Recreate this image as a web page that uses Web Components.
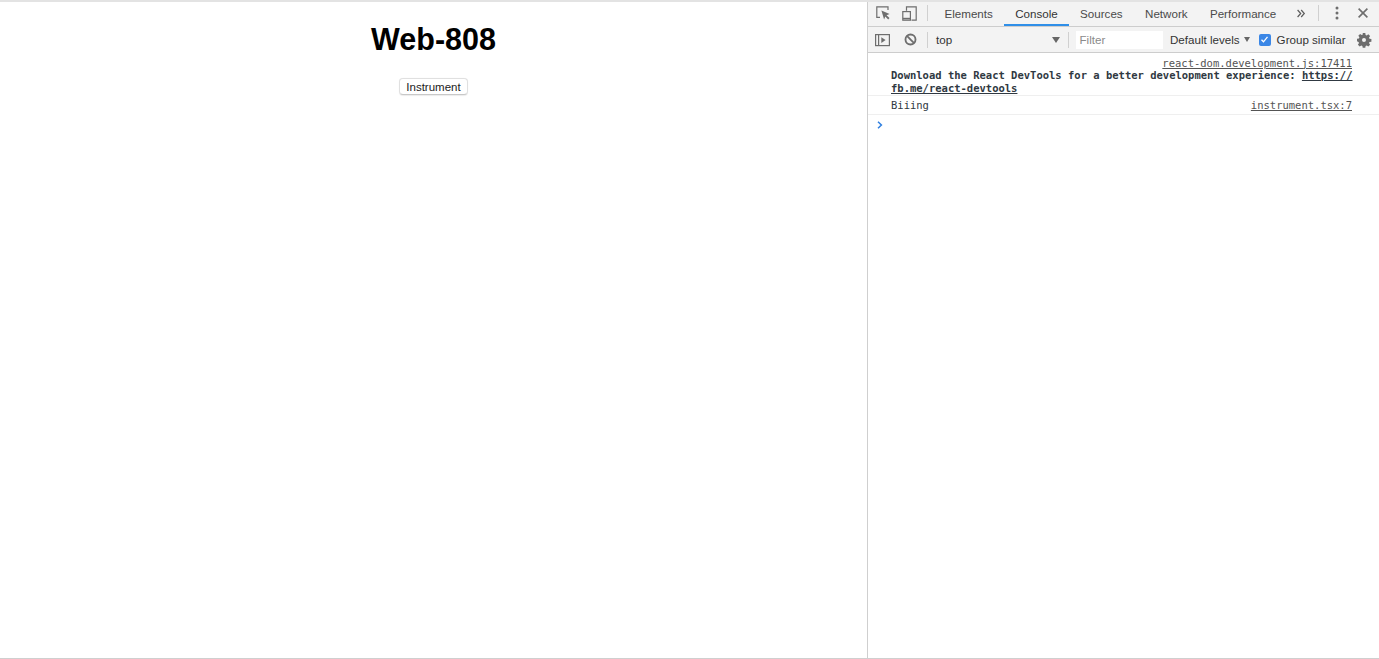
<!DOCTYPE html>
<html>
<head>
<meta charset="utf-8">
<title>Web-808</title>
<style>
  html, body { margin: 0; height: 100%; overflow: hidden; background: #fff; }
  body { font-family: "Liberation Sans", Arial, sans-serif; }
</style>
</head>
<body>
<browser-frame>
  <app-page slot="page" heading="Web-808">
    <app-button>Instrument</app-button>
  </app-page>
  <dev-tools slot="tools"></dev-tools>
</browser-frame>

<script>
// outer frame: page on the left, devtools on the right
class BrowserFrame extends HTMLElement {
  constructor() {
    super();
    this.attachShadow({ mode: 'open' });
    this.shadowRoot.innerHTML = `
      <style>
        :host {
          display: grid;
          grid-template-columns: 867px 1fr;
          height: 659px;
          box-sizing: border-box;
          border-top: 2px solid #e3e3e3;
          border-bottom: 1px solid #cfcfcf;
        }
      </style>
      <slot name="page"></slot>
      <slot name="tools"></slot>
    `;
  }
}

class AppPage extends HTMLElement {
  constructor() {
    super();
    this.attachShadow({ mode: 'open' });
    this.shadowRoot.innerHTML = `
      <style>
        :host {
          display: flex;
          flex-direction: column;
          align-items: center;
          padding-top: 19px;
          color: #000;
          font-family: "Liberation Sans", Arial, sans-serif;
        }
        h1 {
          margin: 0 0 20px;
          font-size: 30.5px;
          line-height: 37px;
          font-weight: 700;
        }
      </style>
      <h1></h1>
      <slot></slot>
    `;
  }
  connectedCallback() {
    this.shadowRoot.querySelector('h1').textContent = this.getAttribute('heading');
  }
}

class AppButton extends HTMLElement {
  constructor() {
    super();
    this.attachShadow({ mode: 'open' });
    this.shadowRoot.innerHTML = `
      <style>
        :host { display: inline-block; }
        button {
          display: block;
          box-sizing: border-box;
          height: 17px;
          width: 69px;
          padding: 0;
          background: #fff;
          border: 1px solid #e0e0e0;
          border-bottom-color: #c8c8c8;
          border-radius: 4px;
          box-shadow: 0 .5px 1px rgba(0, 0, 0, .08);
          font: 11.5px "Liberation Sans", Arial, sans-serif;
          color: #1c1c1c;
        }
      </style>
      <button><slot></slot></button>
    `;
  }
}

const ICONS = {
  inspect: `<svg width="14" height="14" viewBox="0 0 14 14" fill="none" stroke="#6e6e6e" stroke-width="1.2">
      <path d="M4 11.400H.8V.8H12V4"/><path d="M5.400 4.600 13.600 8l-3.100 1.200 3 2.900-1.300 1.300-2.900-3-1.200 3.100z" fill="#6e6e6e" stroke="none"/></svg>`,
  device: `<svg width="15" height="15" viewBox="0 0 15 15" fill="none" stroke="#6e6e6e" stroke-width="1.2">
      <path d="M4.500 4.800V.8h9.700v13.400H9.500"/><rect x=".8" y="5.600" width="7.600" height="8.600"/><path d="M.8 12.600h7.600" stroke-width="1.600"/></svg>`,
  drawer: `<svg width="15" height="14" viewBox="0 0 15 14" fill="none" stroke="#6e6e6e" stroke-width="1.2">
      <rect x=".6" y="1.600" width="13.800" height="11"/><path d="M3.600 1.600v11"/><path d="M6.300 4.200 10.600 7.100 6.300 10z" fill="#6e6e6e" stroke="none"/></svg>`,
  clear: `<svg width="13" height="13" viewBox="0 0 14 14" fill="none" stroke="#6e6e6e" stroke-width="2">
      <circle cx="7" cy="7" r="5.400"/><path d="M3.400 3.400 10.600 10.600"/></svg>`,
  more: `<svg width="8" height="9" viewBox="0 0 8 9" fill="none" stroke="#5c5c5c" stroke-width="1.200">
      <path d="M.6 1 3.700 4.500.6 8M4.200 1 7.300 4.500 4.200 8"/></svg>`,
  dots: `<svg width="4" height="14" viewBox="0 0 4 14" fill="#6e6e6e">
      <circle cx="2" cy="2" r="1.500"/><circle cx="2" cy="7" r="1.500"/><circle cx="2" cy="12" r="1.500"/></svg>`,
  close: `<svg width="10" height="10" viewBox="0 0 10 10" fill="none" stroke="#6e6e6e" stroke-width="1.600">
      <path d="M.6.600 9.400 9.400M9.400.600.600 9.400"/></svg>`,
  gear: `<svg width="14" height="14" viewBox="0 0 14 14">
      <path fill="#6e6e6e" fill-rule="evenodd" d="M5.700 0h2.600l.3 1.900 1.100.5 1.600-1.100 1.800 1.800-1.100 1.600.5 1.100 1.900.3v2.600l-1.900.3-.5 1.100 1.100 1.600-1.800 1.800-1.600-1.100-1.100.5-.3 1.900H5.700l-.3-1.900-1.100-.5-1.600 1.100-1.800-1.800 1.100-1.600-.5-1.100L0 8.300V5.700l1.900-.3.500-1.100-1.100-1.600 1.800-1.800 1.600 1.100 1.100-.5zM7 5a2 2 0 1 0 0 4 2 2 0 0 0 0-4z"/></svg>`
};

class DevIcon extends HTMLElement {
  constructor() {
    super();
    this.attachShadow({ mode: 'open' });
  }
  connectedCallback() {
    this.shadowRoot.innerHTML = `
      <style>:host { display: inline-flex; align-items: center; justify-content: center; flex: none; } svg { display: block; overflow: visible; }</style>
      ${ICONS[this.getAttribute('name')]}
    `;
  }
}

class DevTools extends HTMLElement {
  constructor() {
    super();
    this.attachShadow({ mode: 'open' });
    this.shadowRoot.innerHTML = `
      <style>
        :host {
          display: flex;
          flex-direction: column;
          border-left: 1px solid #cfcfcf;
          font-family: "Liberation Sans", Arial, sans-serif;
          font-size: 11.6px;
          color: #333;
          min-width: 0;
        }
        .bar {
          display: flex;
          align-items: center;
          background: #f3f3f3;
          border-bottom: 1px solid #cdcdcd;
          box-sizing: border-box;
          flex: none;
          white-space: nowrap;
        }
        .tabs { height: 25px; }
        .tabs dev-icon, .tabs .sep { margin-bottom: 2px; }
        .filters { height: 26px; }
        .sep { width: 1px; height: 16px; background: #d0d0d0; flex: none; }
        .tab { padding: 0 11.2px 2px; height: 100%; display: flex; align-items: center; color: #4a4a4a; box-sizing: border-box; flex: none; }
        .tab.on { color: #333; border-bottom: 2px solid #2f8fe8; padding-bottom: 0; }
        .filter {
          width: 87px; height: 18px; background: #fff; display: flex; align-items: center;
          padding-left: 3.5px; box-sizing: border-box; color: #8a8a8a; flex: none;
        }
        .check {
          width: 12px; height: 12px; border-radius: 2px; background: #3b87e6; display: flex;
          align-items: center; justify-content: center; flex: none;
        }
        .prompt { padding: 6px 0 0 9px; line-height: 0; }
      </style>
      <div class="bar tabs">
        <dev-icon name="inspect" style="margin-left:8px"></dev-icon>
        <dev-icon name="device" style="margin-left:12px"></dev-icon>
        <span class="sep" style="margin-left:10px;margin-right:5.300px"></span>
        <span class="tab">Elements</span>
        <span class="tab on">Console</span>
        <span class="tab">Sources</span>
        <span class="tab">Network</span>
        <span class="tab">Performance</span>
        <dev-icon name="more" style="margin-left:9.400px"></dev-icon>
        <span class="sep" style="margin-left:13px;margin-right:16px"></span>
        <dev-icon name="dots"></dev-icon>
        <dev-icon name="close" style="margin-left:19px"></dev-icon>
      </div>
      <div class="bar filters">
        <dev-icon name="drawer" style="margin-left:7px"></dev-icon>
        <dev-icon name="clear" style="margin-left:14px"></dev-icon>
        <span class="sep" style="margin:0 8px 0 10px"></span>
        <span style="flex:none;width:116px">top</span>
        <span style="width:0;height:0;border:4px solid transparent;border-top:6px solid #666;border-bottom:0;flex:none"></span>
        <span class="sep" style="margin:0 7px 0 8px"></span>
        <span class="filter">Filter</span>
        <span style="margin-left:7px;flex:none">Default levels</span>
        <span style="width:0;height:0;border:3.500px solid transparent;border-top:5px solid #666;border-bottom:0;flex:none;margin-left:4px"></span>
        <span class="check" style="margin-left:9px">
          <svg width="9" height="9" viewBox="0 0 9 9" fill="none" stroke="#fff" stroke-width="1.300"><path d="M1.500 4.700 3.500 6.800 7.500 1.800"/></svg>
        </span>
        <span style="margin-left:6px;flex:none">Group similar</span>
        <dev-icon name="gear" style="margin-left:11px"></dev-icon>
      </div>
      <console-row source="react-dom.development.js:17411" stacked>
        <b>Download the React DevTools for a better development experience: <a style="text-decoration:underline">https://<wbr>fb.me/react-devtools</a></b>
      </console-row>
      <console-row source="instrument.tsx:7">Biiing</console-row>
      <div class="prompt">
        <svg width="6" height="8" viewBox="0 0 6 8" fill="none" stroke="#2f7fe0" stroke-width="1.500"><path d="M1 .8 4.400 4 1 7.200"/></svg>
      </div>
    `;
  }
}

class ConsoleRow extends HTMLElement {
  constructor() {
    super();
    this.attachShadow({ mode: 'open' });
    this.shadowRoot.innerHTML = `
      <style>
        :host {
          display: block;
          border-bottom: 1px solid #efefef;
          padding: 2.5px 25px 2.5px 23px;
          font: 10.5px/12.5px "DejaVu Sans Mono", "Liberation Mono", monospace;
          color: #303942;
          box-sizing: border-box;
        }
        :host([stacked]) { padding-top: 3.5px; padding-bottom: 1px; }
        .src { float: right; margin-right: 2px; text-decoration: underline; color: #545454; }
      </style>
      <a class="src"></a><div class="line"><slot></slot></div>
    `;
  }
  connectedCallback() {
    this.shadowRoot.querySelector('.src').textContent = this.getAttribute('source');
    if (this.hasAttribute('stacked')) {
      this.shadowRoot.querySelector('.line').style.clear = 'right';
    }
  }
}

customElements.define('browser-frame', BrowserFrame);
customElements.define('app-page', AppPage);
customElements.define('app-button', AppButton);
customElements.define('dev-icon', DevIcon);
customElements.define('dev-tools', DevTools);
customElements.define('console-row', ConsoleRow);
</script>
</body>
</html>
